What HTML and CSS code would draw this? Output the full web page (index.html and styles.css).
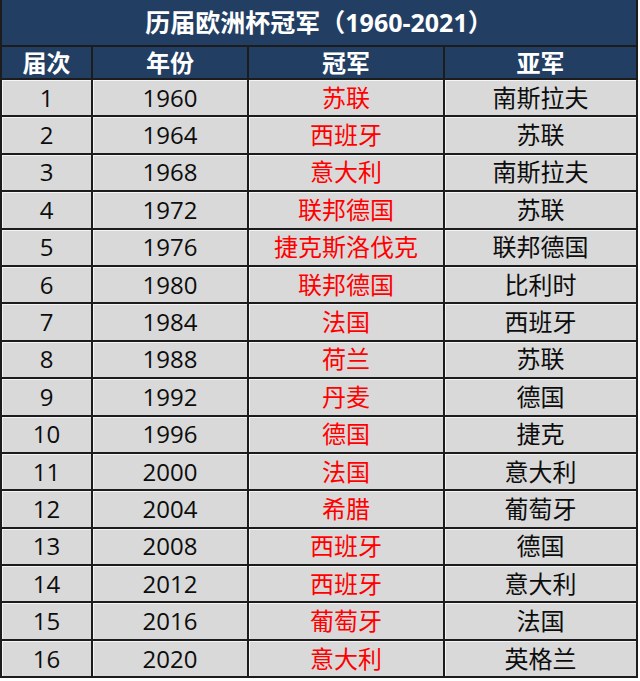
FILE: index.html
```html
<!DOCTYPE html>
<html lang="zh">
<head>
<meta charset="utf-8">
<title>历届欧洲杯冠军</title>
<link rel="stylesheet" href="styles.css">
</head>
<body>
<div class="sheet">
  <div class="title">历届欧洲杯冠军（1960-2021）</div>
  <div class="head">届次</div><div class="head">年份</div><div class="head">冠军</div><div class="head">亚军</div>
  <div class="cell">1</div><div class="cell">1960</div><div class="cell win">苏联</div><div class="cell">南斯拉夫</div>
  <div class="cell">2</div><div class="cell">1964</div><div class="cell win">西班牙</div><div class="cell">苏联</div>
  <div class="cell">3</div><div class="cell">1968</div><div class="cell win">意大利</div><div class="cell">南斯拉夫</div>
  <div class="cell">4</div><div class="cell">1972</div><div class="cell win">联邦德国</div><div class="cell">苏联</div>
  <div class="cell">5</div><div class="cell">1976</div><div class="cell win">捷克斯洛伐克</div><div class="cell">联邦德国</div>
  <div class="cell">6</div><div class="cell">1980</div><div class="cell win">联邦德国</div><div class="cell">比利时</div>
  <div class="cell">7</div><div class="cell">1984</div><div class="cell win">法国</div><div class="cell">西班牙</div>
  <div class="cell">8</div><div class="cell">1988</div><div class="cell win">荷兰</div><div class="cell">苏联</div>
  <div class="cell">9</div><div class="cell">1992</div><div class="cell win">丹麦</div><div class="cell">德国</div>
  <div class="cell">10</div><div class="cell">1996</div><div class="cell win">德国</div><div class="cell">捷克</div>
  <div class="cell">11</div><div class="cell">2000</div><div class="cell win">法国</div><div class="cell">意大利</div>
  <div class="cell">12</div><div class="cell">2004</div><div class="cell win">希腊</div><div class="cell">葡萄牙</div>
  <div class="cell">13</div><div class="cell">2008</div><div class="cell win">西班牙</div><div class="cell">德国</div>
  <div class="cell">14</div><div class="cell">2012</div><div class="cell win">西班牙</div><div class="cell">意大利</div>
  <div class="cell">15</div><div class="cell">2016</div><div class="cell win">葡萄牙</div><div class="cell">法国</div>
  <div class="cell">16</div><div class="cell">2020</div><div class="cell win">意大利</div><div class="cell">英格兰</div>
</div>
</body>
</html>
```

FILE: styles.css
```css
html, body {
  margin: 0;
  padding: 0;
  background: #ffffff;
}

.sheet {
  width: 638px;
  box-sizing: border-box;
  display: grid;
  grid-template-columns: 89px 154px 194px 191px;
  grid-template-rows: 45px 31px repeat(16, 35.4px);
  column-gap: 2px;
  row-gap: 2px;
  padding: 0 2px 2px 2px;
  background: #1c1c1c;
  font-family: "Open Sans", "Noto Sans CJK SC", sans-serif;
  font-size: 24px;
  line-height: 1;
}

.title {
  grid-column: 1 / -1;
  background: #233e63;
  color: #ffffff;
  font-weight: bold;
  font-size: 25px;
  display: flex;
  align-items: center;
  justify-content: center;
}

.head {
  background: #233e63;
  color: #ffffff;
  font-weight: bold;
  display: flex;
  align-items: center;
  justify-content: center;
}

.cell {
  background: #d9d9d9;
  color: #0d0d0d;
  display: flex;
  align-items: center;
  justify-content: center;
  box-shadow: inset 1px 1px 0 #f4f4f4;
}

.win {
  color: #ff0000;
}
```
